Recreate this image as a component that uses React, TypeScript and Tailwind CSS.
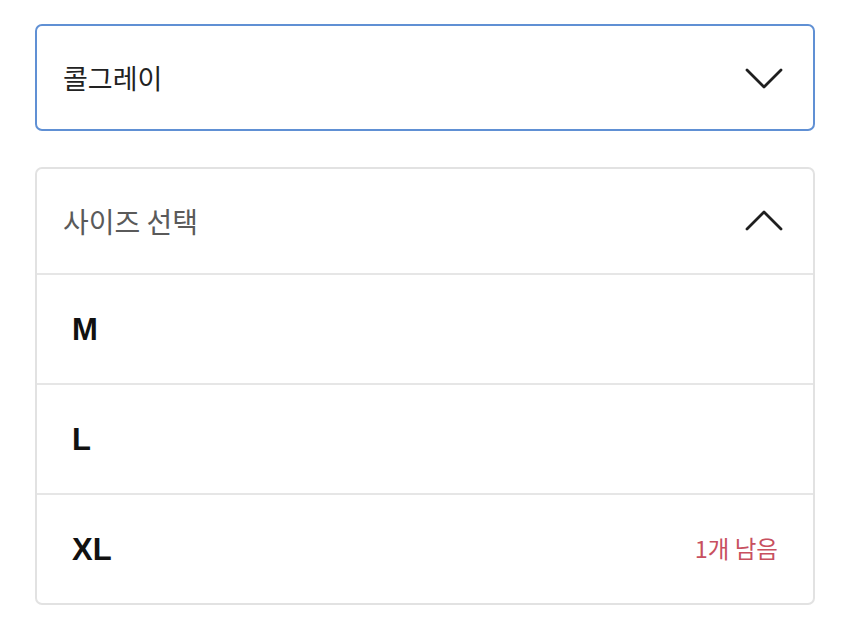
import React from 'react';

const sizes = [
  { label: 'M', note: '' },
  { label: 'L', note: '' },
  { label: 'XL', note: '1개 남음' },
];

function Chevron({ up }: { up?: boolean }) {
  return (
    <svg width="38" height="22" viewBox="0 0 38 22" fill="none" className="shrink-0">
      <polyline
        points={up ? '2,19 19,2 36,19' : '2,3 19,20 36,3'}
        stroke="#1f1f1f"
        strokeWidth="2.8"
        strokeLinecap="round"
        strokeLinejoin="round"
      />
    </svg>
  );
}

export default function App() {
  return (
    <div
      className="w-[850px] h-[626px] bg-white pt-[24px] pl-[35px] flex flex-col gap-[36px]"
      style={{ fontFamily: '"Noto Sans CJK KR", "Noto Sans", sans-serif' }}
    >
      {/* colour select */}
      <div className="w-[780px] h-[107px] border-2 border-[#6090d4] rounded-[7px] flex items-center justify-between pl-[26px] pr-[30px]">
        <span className="text-[27px] text-[#222] leading-none">콜그레이</span>
        <Chevron />
      </div>

      {/* size select */}
      <div className="w-[780px] border-2 border-[#e2e2e2] rounded-[7px] flex flex-col">
        <div className="h-[104px] flex items-center justify-between pl-[26px] pr-[30px]">
          <span className="text-[28px] text-[#5a5a5a] leading-none">사이즈 선택</span>
          <Chevron up />
        </div>
        {sizes.map((s) => (
          <div
            key={s.label}
            className="h-[110px] border-t-2 border-[#e6e6e6] flex items-center justify-between pl-[35px] pr-[35px]"
          >
            <span
              className="text-[31px] font-bold text-[#111] leading-none"
              style={{ fontFamily: '"Liberation Sans", Arial, sans-serif' }}
            >
              {s.label}
            </span>
            {s.note && <span className="text-[23.5px] text-[#c8505f] leading-none">{s.note}</span>}
          </div>
        ))}
      </div>
    </div>
  );
}
